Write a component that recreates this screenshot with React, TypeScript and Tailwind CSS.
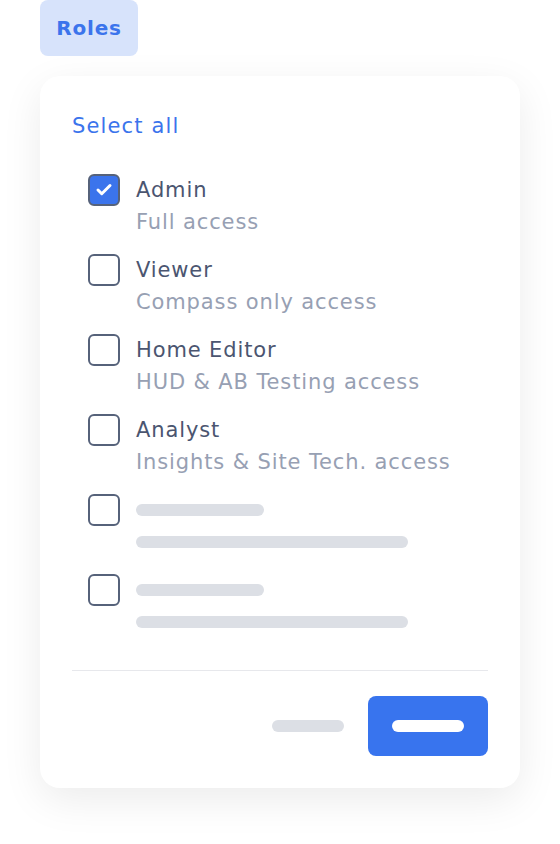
import { Check } from 'lucide-react';

const roles = [
    { name: 'Admin', desc: 'Full access', checked: true },
    { name: 'Viewer', desc: 'Compass only access', checked: false },
    { name: 'Home Editor', desc: 'HUD & AB Testing access', checked: false },
    { name: 'Analyst', desc: 'Insights & Site Tech. access', checked: false },
];

function Box({ checked }: { checked: boolean }) {
    return (
        <div
            className={`w-8 h-8 shrink-0 rounded-md border-2 border-[#56627a] flex items-center justify-center ${
                checked ? 'bg-[#3b74ec]' : 'bg-white'
            }`}
        >
            {checked && <Check className="w-[18px] h-[18px] text-white" strokeWidth={4} />}
        </div>
    );
}

export default function App() {
    return (
        <div className="min-h-screen bg-white pl-10 font-['DejaVu_Sans',sans-serif]">
            <button className="w-[98px] h-14 rounded-lg bg-[#d7e3fb] text-[#3b74ec] text-[20px] font-semibold tracking-[0.04em]">
                Roles
            </button>

            <div className="mt-5 w-[480px] rounded-[20px] bg-white shadow-[0_12px_40px_rgba(0,0,0,0.08)] px-8 pt-9 pb-8">
                <div className="text-[21px] leading-7 text-[#3b74ec] tracking-[0.055em]">Select all</div>

                <div className="mt-[34px] pl-4 flex flex-col gap-4">
                    {roles.map((r) => (
                        <div key={r.name} className="flex gap-4">
                            <Box checked={r.checked} />
                            <div className="tracking-[0.055em]">
                                <div className="text-[21px] leading-8 text-[#4b5570]">{r.name}</div>
                                <div className="text-[21px] leading-8 text-[#97a0b3]">{r.desc}</div>
                            </div>
                        </div>
                    ))}
                    {[0, 1].map((i) => (
                        <div key={i} className="flex gap-4">
                            <Box checked={false} />
                            <div>
                                <div className="h-8 flex items-center">
                                    <div className="w-32 h-3 rounded-full bg-[#dcdfe5]" />
                                </div>
                                <div className="h-8 flex items-center">
                                    <div className="w-[272px] h-3 rounded-full bg-[#dcdfe5]" />
                                </div>
                            </div>
                        </div>
                    ))}
                </div>

                <div className="mt-8 border-t border-[#e7e8ec]" />

                <div className="mt-[25px] flex items-center justify-end gap-6">
                    <div className="w-[72px] h-3 rounded-full bg-[#dcdfe5]" />
                    <button className="w-[120px] h-[60px] rounded-lg bg-[#3874ee] flex items-center justify-center">
                        <div className="w-[72px] h-3 rounded-full bg-white" />
                    </button>
                </div>
            </div>
        </div>
    );
}
